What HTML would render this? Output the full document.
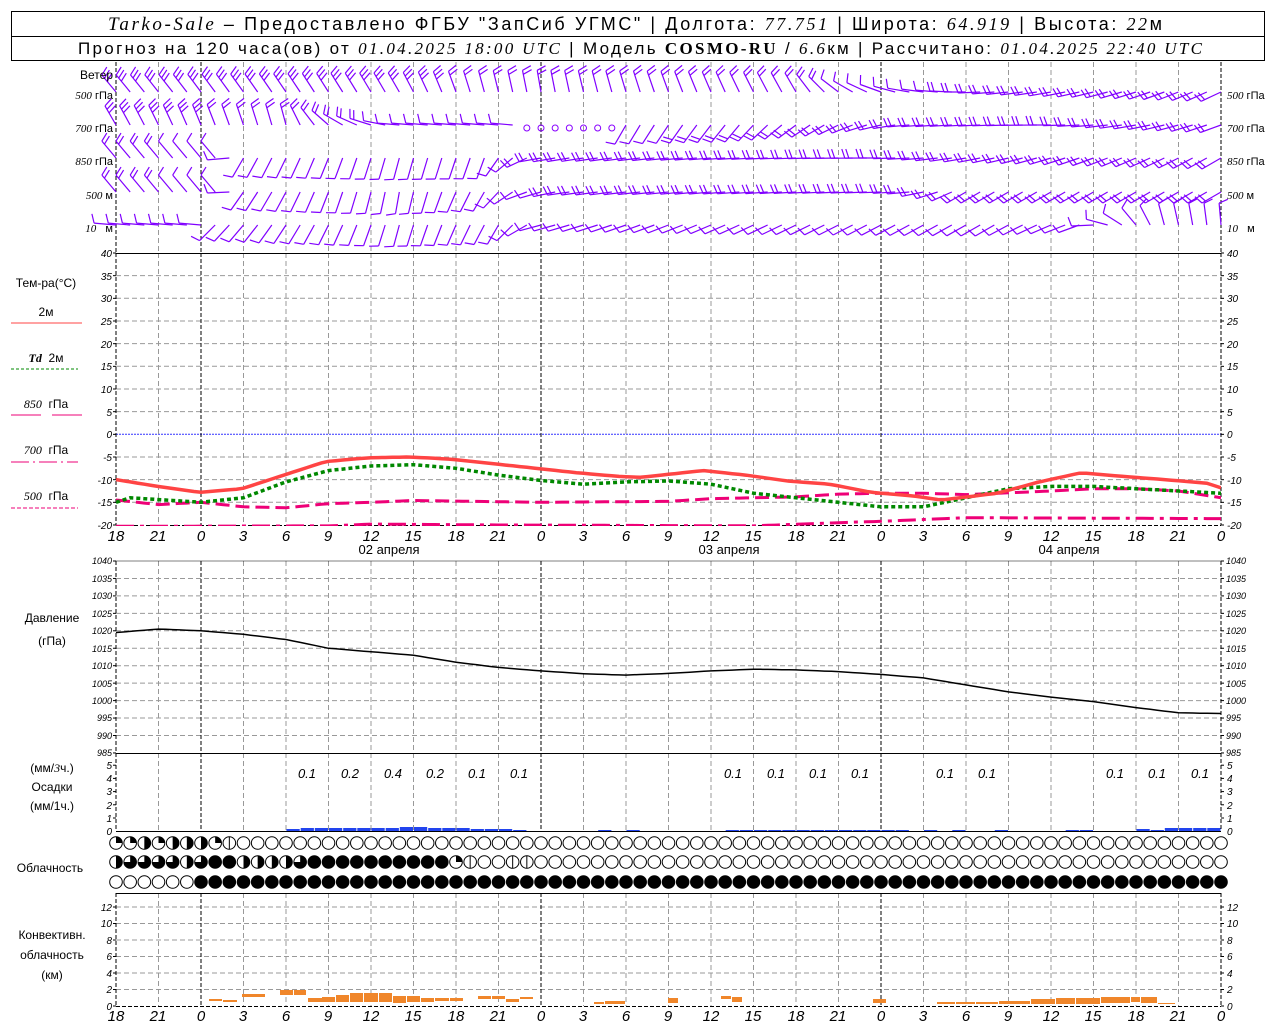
<!DOCTYPE html>
<html><head><meta charset="utf-8"><style>
html,body{margin:0;padding:0;background:#fff;width:1280px;height:1024px;overflow:hidden}
svg{display:block}
text{font-family:"Liberation Sans",sans-serif;fill:#000}
.t{font-size:10px;font-style:italic}
.r{text-anchor:end}
.m{text-anchor:middle}
.h{font-size:15px;font-style:italic;text-anchor:middle}
.l{font-size:12px;text-anchor:middle}
.s{font-size:11px}
.i{font-style:italic;font-family:"Liberation Serif",serif}
</style></head><body>
<svg id="s" width="1280" height="1024" viewBox="0 0 1280 1024" xmlns="http://www.w3.org/2000/svg">
<rect x="11.5" y="11.5" width="1253" height="49" fill="none" stroke="#000"/>
<line x1="11" y1="36.5" x2="1265" y2="36.5" stroke="#000"/>
<text x="108" y="30" textLength="1054" lengthAdjust="spacing" style="font-size:18px"><tspan class="i" style="font-size:19px">Tarko-Sale</tspan> – Предоставлено ФГБУ "ЗапСиб УГМС" | Долгота: <tspan class="i">77.751</tspan> | Широта: <tspan class="i">64.919</tspan> | Высота: <tspan class="i">22</tspan>м</text>
<text x="78" y="54" textLength="1124" lengthAdjust="spacing" style="font-size:17px">Прогноз на 120 часа(ов) от <tspan class="i">01.04.2025 18:00 UTC</tspan> | Модель <tspan class="i" style="font-weight:bold;font-style:normal">COSMO-RU</tspan> / <tspan class="i">6.6</tspan>км | Рассчитано: <tspan class="i">01.04.2025 22:40 UTC</tspan></text>
<g id="g"></g>
<!-- wind labels -->
<text x="113" y="79" class="r" style="font-size:12px">Ветер</text>
<text x="113" y="99" class="r s"><tspan class="i">500</tspan> гПа</text>
<text x="113" y="132" class="r s"><tspan class="i">700</tspan> гПа</text>
<text x="113" y="165" class="r s"><tspan class="i">850</tspan> гПа</text>
<text x="113" y="199" class="r s"><tspan class="i">500</tspan> м</text>
<text x="113" y="232" class="r s"><tspan class="i">10</tspan>&#160;&#160;&#160;м</text>
<text x="1227" y="99" class="s"><tspan class="i">500</tspan> гПа</text>
<text x="1227" y="132" class="s"><tspan class="i">700</tspan> гПа</text>
<text x="1227" y="165" class="s"><tspan class="i">850</tspan> гПа</text>
<text x="1227" y="199" class="s"><tspan class="i">500</tspan> м</text>
<text x="1227" y="232" class="s"><tspan class="i">10</tspan>&#160;&#160;&#160;м</text>
<!-- temp legend -->
<text x="46" y="287" class="l">Тем-ра(°С)</text>
<text x="46" y="316" class="l">2м</text>
<line x1="11" y1="323" x2="82" y2="323" stroke="#f44" stroke-width="1"/>
<text x="46" y="362" class="l"><tspan class="i" style="font-weight:bold">Td</tspan>&#160;&#160;2м</text>
<line x1="11" y1="369" x2="78" y2="369" stroke="#080" stroke-dasharray="3,2"/>
<text x="46" y="408" class="l"><tspan class="i">850</tspan>&#160;&#160;гПа</text>
<line x1="11" y1="415" x2="41" y2="415" stroke="#e07"/><line x1="52" y1="415" x2="82" y2="415" stroke="#e07"/>
<text x="46" y="454" class="l"><tspan class="i">700</tspan>&#160;&#160;гПа</text>
<line x1="11" y1="462" x2="78" y2="462" stroke="#e07" stroke-dasharray="18,4,2,4"/>
<text x="46" y="500" class="l"><tspan class="i">500</tspan>&#160;&#160;гПа</text>
<line x1="11" y1="508" x2="78" y2="508" stroke="#e07" stroke-dasharray="4,2"/>
<!-- temp axis -->
<g class="t r">
<text x="112" y="257">40</text><text x="112" y="280">35</text><text x="112" y="302">30</text><text x="112" y="325">25</text><text x="112" y="348">20</text><text x="112" y="370">15</text><text x="112" y="393">10</text><text x="112" y="416">5</text><text x="112" y="438">0</text><text x="112" y="461">-5</text><text x="112" y="484">-10</text><text x="112" y="506">-15</text><text x="112" y="529">-20</text>
</g>
<g class="t">
<text x="1227" y="257">40</text><text x="1227" y="280">35</text><text x="1227" y="302">30</text><text x="1227" y="325">25</text><text x="1227" y="348">20</text><text x="1227" y="370">15</text><text x="1227" y="393">10</text><text x="1227" y="416">5</text><text x="1227" y="438">0</text><text x="1227" y="461">-5</text><text x="1227" y="484">-10</text><text x="1227" y="506">-15</text><text x="1227" y="529">-20</text>
</g>
<g class="h">
<text x="116" y="541">18</text><text x="158" y="541">21</text><text x="201" y="541">0</text><text x="243" y="541">3</text><text x="286" y="541">6</text><text x="328" y="541">9</text><text x="371" y="541">12</text><text x="413" y="541">15</text><text x="456" y="541">18</text><text x="498" y="541">21</text><text x="541" y="541">0</text><text x="583" y="541">3</text><text x="626" y="541">6</text><text x="668" y="541">9</text><text x="711" y="541">12</text><text x="753" y="541">15</text><text x="796" y="541">18</text><text x="838" y="541">21</text><text x="881" y="541">0</text><text x="923" y="541">3</text><text x="966" y="541">6</text><text x="1008" y="541">9</text><text x="1051" y="541">12</text><text x="1093" y="541">15</text><text x="1136" y="541">18</text><text x="1178" y="541">21</text><text x="1221" y="541">0</text>
</g>
<text x="389" y="554" class="l" style="font-size:13px">02 апреля</text>
<text x="729" y="554" class="l" style="font-size:13px">03 апреля</text>
<text x="1069" y="554" class="l" style="font-size:13px">04 апреля</text>
<!-- pressure -->
<text x="52" y="622" class="l">Давление</text>
<text x="52" y="645" class="l">(гПа)</text>
<g class="t r" style="font-size:9px">
<text x="112" y="564">1040</text><text x="112" y="582">1035</text><text x="112" y="599">1030</text><text x="112" y="617">1025</text><text x="112" y="634">1020</text><text x="112" y="652">1015</text><text x="112" y="669">1010</text><text x="112" y="687">1005</text><text x="112" y="704">1000</text><text x="112" y="721">995</text><text x="112" y="739">990</text><text x="112" y="756">985</text>
</g>
<g class="t" style="font-size:9px">
<text x="1226" y="564">1040</text><text x="1226" y="582">1035</text><text x="1226" y="599">1030</text><text x="1226" y="617">1025</text><text x="1226" y="634">1020</text><text x="1226" y="652">1015</text><text x="1226" y="669">1010</text><text x="1226" y="687">1005</text><text x="1226" y="704">1000</text><text x="1226" y="721">995</text><text x="1226" y="739">990</text><text x="1226" y="756">985</text>
</g>
<!-- precip -->
<text x="52" y="772" class="l">(мм/<tspan class="i">3</tspan>ч.)</text>
<text x="52" y="791" class="l">Осадки</text>
<text x="52" y="810" class="l">(мм/1ч.)</text>
<g class="t r"><text x="112" y="769">5</text><text x="112" y="782">4</text><text x="112" y="795">3</text><text x="112" y="809">2</text><text x="112" y="822">1</text><text x="112" y="835">0</text></g>
<g class="t"><text x="1227" y="769">5</text><text x="1227" y="782">4</text><text x="1227" y="795">3</text><text x="1227" y="809">2</text><text x="1227" y="822">1</text><text x="1227" y="835">0</text></g>
<g class="h" style="font-size:13px">
<text x="307" y="778">0.1</text><text x="350" y="778">0.2</text><text x="393" y="778">0.4</text><text x="435" y="778">0.2</text><text x="477" y="778">0.1</text><text x="519" y="778">0.1</text><text x="733" y="778">0.1</text><text x="776" y="778">0.1</text><text x="818" y="778">0.1</text><text x="860" y="778">0.1</text><text x="945" y="778">0.1</text><text x="987" y="778">0.1</text><text x="1115" y="778">0.1</text><text x="1157" y="778">0.1</text><text x="1200" y="778">0.1</text>
</g>
<text x="50" y="872" class="l">Облачность</text>
<text x="52" y="939" class="l">Конвективн.</text>
<text x="52" y="959" class="l">облачность</text>
<text x="52" y="979" class="l">(км)</text>
<g class="t r"><text x="112" y="911">12</text><text x="112" y="927">10</text><text x="112" y="944">8</text><text x="112" y="960">6</text><text x="112" y="977">4</text><text x="112" y="993">2</text><text x="112" y="1010">0</text></g>
<g class="t"><text x="1227" y="911">12</text><text x="1227" y="927">10</text><text x="1227" y="944">8</text><text x="1227" y="960">6</text><text x="1227" y="977">4</text><text x="1227" y="993">2</text><text x="1227" y="1010">0</text></g>
<g class="h">
<text x="116" y="1021">18</text><text x="158" y="1021">21</text><text x="201" y="1021">0</text><text x="243" y="1021">3</text><text x="286" y="1021">6</text><text x="328" y="1021">9</text><text x="371" y="1021">12</text><text x="413" y="1021">15</text><text x="456" y="1021">18</text><text x="498" y="1021">21</text><text x="541" y="1021">0</text><text x="583" y="1021">3</text><text x="626" y="1021">6</text><text x="668" y="1021">9</text><text x="711" y="1021">12</text><text x="753" y="1021">15</text><text x="796" y="1021">18</text><text x="838" y="1021">21</text><text x="881" y="1021">0</text><text x="923" y="1021">3</text><text x="966" y="1021">6</text><text x="1008" y="1021">9</text><text x="1051" y="1021">12</text><text x="1093" y="1021">15</text><text x="1136" y="1021">18</text><text x="1178" y="1021">21</text><text x="1221" y="1021">0</text>
</g>
</svg>
<script>
(function(){
var G=document.getElementById('g'),out=[];
function X(h){return 116+h*14.1667}
function L(x1,y1,x2,y2,st){out.push('<line x1="'+x1+'" y1="'+y1+'" x2="'+x2+'" y2="'+y2+'" '+st+'/>')}
function interp(k,h){for(var i=0;i<k.length-1;i++){if(h<=k[i+1][0]){var a=k[i],b=k[i+1],t=(h-a[0])/(b[0]-a[0]);return a[1]+(b[1]-a[1])*t}}return k[k.length-1][1]}
var grey='stroke="#999" stroke-dasharray="5,3"',blk='stroke="#000" stroke-dasharray="4,2"';
var panels=[[62,253],[253,525],[561,753],[753,831],[893,1006]];
for(var T=35;T>=-15;T-=5){var y=434.3-T*4.533;L(116,y,1221,y,T==0?'stroke="#33f" stroke-dasharray="2,1"':grey)}
for(var P=1035;P>985;P-=5){var y=561+(1040-P)*3.49;L(116,y,1221,y,grey)}
for(var k=2;k<=12;k+=2){var y=1006-k*8.25;L(116,y,1221,y,grey)}
for(var h=3;h<78;h+=3){var isd=(h%24==6);panels.forEach(function(p){L(X(h),p[0],X(h),p[1],isd?blk:grey)})}
panels.forEach(function(p){L(116,p[0],116,p[1],blk);L(1221,p[0],1221,p[1],blk)});
L(116,253.5,1221,253.5,'stroke="#000"');L(116,753.5,1221,753.5,'stroke="#000"');L(116,831.5,1221,831.5,'stroke="#000"');L(116,893.5,1221,893.5,'stroke="#000"');L(116,1006.5,1221,1006.5,blk);L(116,525.5,1221,525.5,blk);L(116,561,1221,561,'stroke="#000" stroke-width="0.5"');
function ticks(y0,y1,step){for(var y=y0;y<=y1+0.1;y+=step){L(113,y,116,y,'stroke="#000"');L(1221,y,1224,y,'stroke="#000"')}}
ticks(253,525,22.667);ticks(561,753,17.45);ticks(765.2,831,13.2);ticks(907,1006,16.5);
function curve(k,fy,st){var d='';for(var h=0;h<=78;h+=0.5){d+=(h?'L':'M')+X(h).toFixed(1)+','+fy(interp(k,h)).toFixed(1)}out.push('<path d="'+d+'" fill="none" '+st+'/>')}
var ty=function(t){return 434.3-t*4.533};
out.push('<clipPath id="c"><rect x="116" y="253" width="1105" height="273"/></clipPath><g clip-path="url(#c)">');
curve([[0,-20.3],[15,-20.2],[18,-19.8],[27,-20],[45,-20.2],[51,-19.5],[54,-19.2],[57,-18.8],[60,-18.4],[78,-18.6]],ty,'stroke="#e07" stroke-width="3" stroke-dasharray="18,6,4,6"');
curve([[0,-14.5],[3,-15.5],[6,-15],[9,-16],[12,-16.2],[15,-15.3],[18,-15],[21,-14.6],[30,-15],[39,-14.8],[42,-14.2],[48,-13.8],[51,-13.2],[54,-13],[57,-13],[60,-13.3],[66,-12.5],[69,-12],[72,-12],[75,-12.5],[78,-14]],ty,'stroke="#e07" stroke-width="3" stroke-dasharray="14,6"');
curve([[0,-15],[1,-14],[6,-15],[9,-14],[12,-10.5],[15,-8],[18,-7],[21,-6.7],[24,-7.5],[27,-9],[30,-10.2],[33,-11],[36,-10.5],[39,-10.3],[42,-11],[45,-13],[48,-14],[51,-15],[54,-16],[57,-16],[60,-14],[63,-12],[66,-11.5],[69,-11.5],[72,-12],[75,-12.5],[78,-13]],ty,'stroke="#080" stroke-width="3.5" stroke-dasharray="4,3"');
curve([[0,-10],[3,-11.5],[6,-12.8],[9,-12],[12,-9],[15,-6],[18,-5.2],[21,-5],[24,-5.5],[27,-6.5],[30,-7.5],[33,-8.5],[36,-9.3],[37.5,-9.5],[42,-8],[45,-9],[48,-10.3],[51,-11],[54,-12.8],[57,-13.6],[59,-14.5],[63,-13],[66,-10.5],[69,-8.5],[72,-9.3],[75,-10],[78,-10.8],[79,-11.8]].map(function(p){return [p[0]*78/79,p[1]]}),ty,'stroke="#f44" stroke-width="3.5"');
out.push('</g>');
curve([[0,1019.5],[3,1020.5],[6,1020],[9,1019],[12,1017.5],[15,1015],[18,1014],[21,1013],[24,1011],[27,1009.5],[30,1008.5],[33,1007.7],[36,1007.3],[39,1007.8],[42,1008.5],[45,1009],[48,1008.8],[51,1008.3],[54,1007.5],[57,1006.5],[60,1004.5],[63,1002.5],[66,1001],[69,999.7],[72,998],[75,996.5],[78,996.3]],function(p){return 561+(1040-p)*3.49},'stroke="#000" stroke-width="1.5"');
var pr=[[13,2],[14,3],[15,3],[16,3],[17,3],[18,3],[19,3],[20,3],[21,4],[22,4],[23,3],[24,3],[25,3],[26,2],[27,2],[28,2],[29,1],[35,1],[37,1],[44,1],[45,1],[46,1],[47,1],[48,1],[49,1],[50,1],[51,1],[52,1],[53,1],[54,1],[55,1],[56,1],[58,1],[60,1],[63,1],[68,1],[69,1],[73,2],[74,1],[75,3],[76,3],[77,3],[78,3]];
pr.forEach(function(p){out.push('<rect x="'+(X(p[0]-1)+0.5).toFixed(1)+'" y="'+(831-p[1])+'" width="13.2" height="'+p[1]+'" fill="#2244ee"/>')});
var cb=[[209,222,999,1001],[223,237,1000,1002],[242,265,994,997],[280,293,990,995],[294,306,990,995],[308,322,998,1002],[322,335,997,1002],[336,349,995,1002],[350,363,993,1002],[364,378,993,1002],[379,392,993,1002],[393,406,996,1003],[407,420,996,1002],[421,434,998,1002],[435,449,998,1001],[450,463,998,1001],[478,491,996,999],[492,505,996,999],[506,519,999,1002],[520,533,997,999],[594,604,1002,1004],[605,625,1001,1004],[668,678,998,1003],[721,731,996,999],[732,742,997,1002],[873,886,999,1003],[937,955,1002,1004],[956,975,1002,1004],[976,998,1002,1004],[999,1030,1001,1004],[1031,1055,999,1004],[1056,1075,998,1004],[1076,1100,998,1004],[1101,1130,997,1003],[1131,1140,997,1002],[1141,1157,997,1003],[1158,1175,1003,1004]];
cb.forEach(function(b){out.push('<rect x="'+b[0]+'" y="'+b[2]+'" width="'+(b[1]-b[0])+'" height="'+(b[3]-b[2])+'" fill="#f0862a"/>')});
var top=[.25,.25,.5,.25,.5,.5,.5,.25,-1],mid=[.5,.75,.75,.75,.75,.5,.75,1,1,.5,.5,.5,.5,.75,1,1,1,1,1,1,1,1,1,1,.25,-1,0,0,-1,-1];
function circ(cx,cy,f){var r=6.3;out.push('<circle cx="'+cx+'" cy="'+cy+'" r="'+r+'" fill="'+(f>=1?'#000':'#fff')+'" stroke="#000"/>');
 if(f>0&&f<1){var a=f*2*Math.PI,x2=cx+r*Math.sin(a),y2=cy-r*Math.cos(a);out.push('<path d="M'+cx+','+cy+' L'+cx+','+(cy-r)+' A'+r+','+r+' 0 '+(f>.5?1:0)+' 1 '+x2.toFixed(1)+','+y2.toFixed(1)+'Z" fill="#000"/>')}
 if(f<0)L(cx,cy-r,cx,cy+r,'stroke="#000"')}
for(var i=0;i<=78;i++){var cx=X(i);circ(cx,843,i<top.length?top[i]:0);circ(cx,862,i<mid.length?mid[i]:0);circ(cx,882,i<6?0:1)}
// wind barbs [h,dir,feathers]
var lv=[[92,[[0,320,3],[20,330,3],[26,345,2],[30,350,2],[48,330,2],[52,300,1],[56,280,1],[62,265,2],[78,245,2]]],
[125,[[0,330,3],[12,345,2],[16,300,2],[20,275,1],[28,275,1],[29.5,0,0],[35.5,0,0],[36,210,1],[44,220,2],[50,240,2],[56,265,2],[66,270,2],[78,250,2]]],
[158,[[0,320,2],[7,320,1],[9,210,1],[20,195,1],[26,200,1],[28,230,1],[30,260,2],[48,268,2],[54,270,2],[60,260,2],[78,240,2]]],
[192,[[0,320,2],[7,320,1],[9,215,1],[20,190,1],[26,210,1],[29,250,1],[32,262,2],[54,268,2],[56,265,2],[60,240,2],[78,240,2]]],
[225,[[0,275,1],[6,275,1],[7,225,1],[20,195,1],[27,210,1],[30,255,1],[45,245,1],[62,240,1],[68,250,1],[72,320,1],[74,345,1],[78,355,1]]]];
lv.forEach(function(l){var y=l[0];for(var h=0;h<=78;h++){var x=X(h),d=interp(l[1].map(function(p){return[p[0],p[1]]}),h),s=Math.round(interp(l[1].map(function(p){return[p[0],p[2]]}),h));
 if(s==0){out.push('<circle cx="'+x+'" cy="'+(y+3)+'" r="3" fill="none" stroke="#80f"/>');continue}
 var a=d*Math.PI/180,ux=Math.sin(a),uy=-Math.cos(a),len=22,ex=x+ux*len,ey=y+uy*len;
 var st='stroke="#8000ff" stroke-width="1.2"';L(x,y,ex.toFixed(1),ey.toFixed(1),st);
 var px=-uy,py=ux;
 for(var f=0;f<s;f++){var bx=ex-ux*f*4,by=ey-uy*f*4;var fx=bx+px*9+ux*3,fy=by+py*9+uy*3;L(bx.toFixed(1),by.toFixed(1),fx.toFixed(1),fy.toFixed(1),st)}
}});
G.innerHTML=out.join('');
})();
</script>
</body></html>
